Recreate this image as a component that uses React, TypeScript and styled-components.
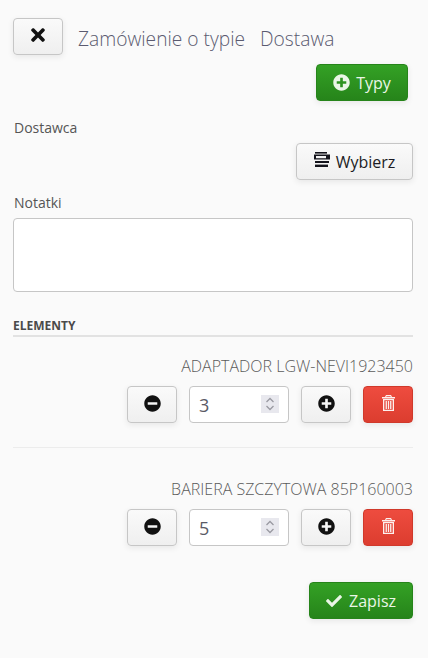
import React from "react";
import styled, { createGlobalStyle, css } from "styled-components";
import { FaTimes, FaPlusCircle, FaMinusCircle, FaCheck } from "react-icons/fa";

const Global = createGlobalStyle`
  html, body { margin: 0; padding: 0; background: #fafafa; }
  body { font-family: "Open Sans", "Liberation Sans", sans-serif; color: #555; }
  * { box-sizing: border-box; }
`;

const Page = styled.div`
  width: 428px;
  height: 658px;
  padding: 18px 15px 0 13px;
  display: flex;
  flex-direction: column;
  overflow: hidden;
`;

type Variant = "default" | "green" | "red";

const Btn = styled.button<{ $variant?: Variant; $w: number; $gap?: number }>`
  width: ${(p) => p.$w}px;
  height: 37px;
  flex: none;
  display: inline-flex;
  align-items: center;
  justify-content: center;
  gap: ${(p) => p.$gap ?? 6}px;
  padding: 0;
  border-radius: 4px;
  font-family: inherit;
  font-size: 16px;
  line-height: 22px;
  cursor: pointer;
  box-shadow: 0 2px 6px rgba(0, 0, 0, 0.08);
  ${(p) =>
    p.$variant === "green"
      ? css`
          color: #eaf6e6;
          border: 1px solid #26841a;
          background: linear-gradient(#34a125, #26841a);
        `
      : p.$variant === "red"
      ? css`
          color: #fdf0ee;
          border: 1px solid #d0392b;
          background: linear-gradient(#ee4c3f, #dc3d2f);
        `
      : css`
          color: #1c1c24;
          border: 1px solid #c6c6c6;
          background: linear-gradient(#fafafa, #efefef);
        `}
`;

const Header = styled.div`
  display: flex;
  align-items: center;
  gap: 15px;
`;

const Title = styled.h1`
  margin: 5px 0 0;
  font-size: 19.2px;
  font-weight: 300;
  line-height: 32px;
  color: #5a5a70;
  white-space: pre;
`;

const Right = styled.div<{ $top: number; $pr?: number }>`
  display: flex;
  justify-content: flex-end;
  margin-top: ${(p) => p.$top}px;
  padding-right: ${(p) => p.$pr ?? 0}px;
`;

const Label = styled.label<{ $top: number }>`
  display: block;
  margin: ${(p) => p.$top}px 0 0 1px;
  font-size: 14px;
  line-height: 20px;
  color: #555;
`;

const Notes = styled.textarea`
  display: block;
  width: 400px;
  height: 74px;
  margin-top: 5px;
  border: 1px solid #c6c6c6;
  border-radius: 4px;
  background: #fff;
  resize: none;
  outline: none;
`;

const SectionTitle = styled.div`
  margin-top: 26px;
  width: 400px;
  height: 19px;
  font-size: 12px;
  font-weight: 700;
  line-height: 16px;
  color: #4a4a4a;
  border-bottom: 2px solid #e2e2e2;
`;

const ItemName = styled.div<{ $top: number }>`
  width: 400px;
  margin-top: ${(p) => p.$top}px;
  text-align: right;
  font-size: 16px;
  font-weight: 300;
  line-height: 22px;
  color: #5a5a5a;
  white-space: nowrap;
`;

const Row = styled.div`
  width: 400px;
  margin-top: 9px;
  display: flex;
  justify-content: flex-end;
  gap: 12px;
`;

const QtyBox = styled.div`
  position: relative;
  width: 100px;
  height: 37px;
  flex: none;
`;

const Qty = styled.input`
  width: 100%;
  height: 100%;
  padding: 0 9px;
  border: 1px solid #c6c6c6;
  border-radius: 4px;
  background: #fff;
  color: #5a5a66;
  font-family: inherit;
  font-size: 18px;
  outline: none;
  appearance: textfield;
  &::-webkit-inner-spin-button {
    appearance: none;
    margin: 0;
  }
`;

const Spinner = styled.svg`
  position: absolute;
  top: 9px;
  right: 10px;
  width: 18px;
  height: 18px;
  background: #e8e8ee;
  pointer-events: none;
`;

const Divider = styled.hr`
  width: 400px;
  height: 1px;
  margin: 24px 0 0;
  border: 0;
  background: #ececec;
`;

const ListGlyph = styled.svg`
  width: 16px;
  height: 16px;
  margin-top: -3px;
  fill: #14141c;
`;

const ListIcon = () => (
  <ListGlyph viewBox="0 0 16 16" aria-hidden="true">
    <rect x="1" y="0" width="12" height="1.6" />
    <path fillRule="evenodd" d="M0 2.6h16v5H0zM2 4v2.2h10V4z" />
    <rect x="1" y="9" width="14" height="2" />
    <rect x="1" y="12.6" width="13" height="2.4" />
  </ListGlyph>
);

const TrashGlyph = styled.svg`
  width: 13px;
  height: 16px;
  margin-top: -3px;
  fill: currentColor;
`;

const TrashIcon = () => (
  <TrashGlyph viewBox="0 0 13 16" aria-hidden="true">
    <path fillRule="evenodd" d="M4 0h5l1 2h3v1.6H0V2h3zM4.6 1.2L4.2 2h4.6l-.4-.8z" />
    <path fillRule="evenodd" d="M1 4h11v12H1zM2.3 5.2v9.6h8.4V5.2z" />
    <rect x="3.6" y="6" width="1.3" height="8" />
    <rect x="5.85" y="6" width="1.3" height="8" />
    <rect x="8.1" y="6" width="1.3" height="8" />
  </TrashGlyph>
);

const CloseIcon = styled(FaTimes)`
  width: 20px;
  height: 20px;
  color: #111;
  margin-top: -3px;
`;

const CircleIcon = styled.span`
  display: inline-flex;
  font-size: 17px;
  color: #111;
  margin-top: -3px;
`;

const items = [
  { name: "ADAPTADOR LGW-NEVI1923450", qty: 3, top: 18 },
  { name: "BARIERA SZCZYTOWA 85P160003", qty: 5, top: 30 },
];

export default function App() {
  return (
    <Page>
      <Global />
      <Header>
        <Btn $w={50} aria-label="Zamknij">
          <CloseIcon />
        </Btn>
        <Title>{"Zamówienie o typie   Dostawa"}</Title>
      </Header>
      <Right $top={9} $pr={5}>
        <Btn $variant="green" $w={92}>
          <FaPlusCircle size={17} />
          Typy
        </Btn>
      </Right>
      <Label $top={17}>Dostawca</Label>
      <Right $top={5}>
        <Btn $w={117}>
          <ListIcon />
          Wybierz
        </Btn>
      </Right>
      <Label $top={13}>Notatki</Label>
      <Notes />
      <SectionTitle>ELEMENTY</SectionTitle>
      {items.map((it, i) => (
        <React.Fragment key={it.name}>
          <ItemName $top={it.top}>{it.name}</ItemName>
          <Row>
            <Btn $w={50} aria-label="Mniej">
              <CircleIcon>
                <FaMinusCircle />
              </CircleIcon>
            </Btn>
            <QtyBox>
              <Qty type="number" defaultValue={it.qty} />
              <Spinner viewBox="0 0 18 18" aria-hidden="true">
                <path d="M5.5 7L9 3.5 12.5 7M5.5 11L9 14.5 12.5 11" fill="none" stroke="#9a9aa2" strokeWidth="1.3" />
              </Spinner>
            </QtyBox>
            <Btn $w={50} aria-label="Więcej">
              <CircleIcon>
                <FaPlusCircle />
              </CircleIcon>
            </Btn>
            <Btn $variant="red" $w={50} aria-label="Usuń">
              <TrashIcon />
            </Btn>
          </Row>
          {i === 0 && <Divider />}
        </React.Fragment>
      ))}
      <Right $top={36}>
        <Btn $variant="green" $w={104} $gap={7}>
          <FaCheck size={16} />
          Zapisz
        </Btn>
      </Right>
    </Page>
  );
}
